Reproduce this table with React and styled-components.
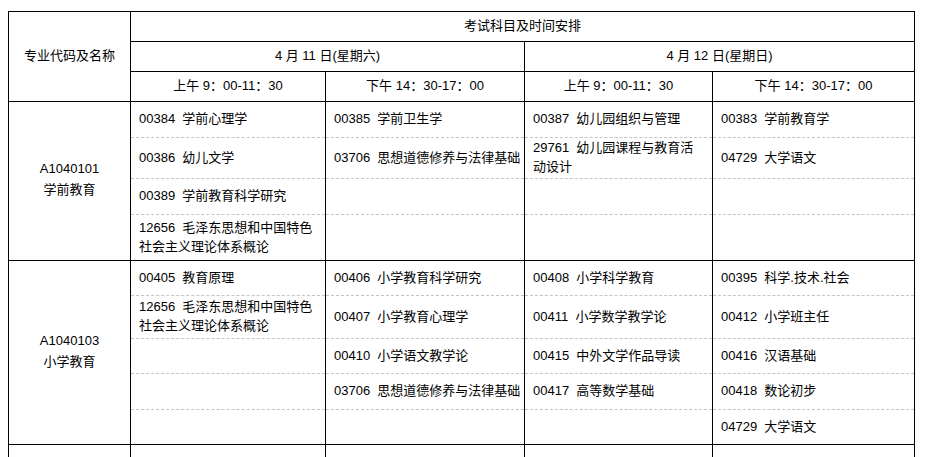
import React from "react";
import styled, { createGlobalStyle } from "styled-components";

const GlobalStyle = createGlobalStyle`
    body {
        margin: 0;
        background: #fff;
    }
`;

const colWidths = [122, 195, 199, 188, 202];

const days = [
    { date: "4 月 11 日(星期六)", slots: ["上午 9：00-11：30", "下午 14：30-17：00"] },
    { date: "4 月 12 日(星期日)", slots: ["上午 9：00-11：30", "下午 14：30-17：00"] },
];

const majors = [
    {
        code: "A1040101",
        name: "学前教育",
        rows: [
            { h: 36, cells: [["00384  学前心理学"], ["00385  学前卫生学"], ["00387  幼儿园组织与管理"], ["00383  学前教育学"]] },
            { h: 41, cells: [["00386  幼儿文学"], ["03706  思想道德修养与法律基础"], ["29761  幼儿园课程与教育活", "动设计"], ["04729  大学语文"]] },
            { h: 36, cells: [["00389  学前教育科学研究"], [], [], []] },
            { h: 46, cells: [["12656  毛泽东思想和中国特色", "社会主义理论体系概论"], [], [], []] },
        ],
    },
    {
        code: "A1040103",
        name: "小学教育",
        rows: [
            { h: 35, cells: [["00405  教育原理"], ["00406  小学教育科学研究"], ["00408  小学科学教育"], ["00395  科学.技术.社会"]] },
            { h: 43, cells: [["12656  毛泽东思想和中国特色", "社会主义理论体系概论"], ["00407  小学教育心理学"], ["00411  小学数学教学论"], ["00412  小学班主任"]] },
            { h: 35, cells: [[], ["00410  小学语文教学论"], ["00415  中外文学作品导读"], ["00416  汉语基础"]] },
            { h: 36, cells: [[], ["03706  思想道德修养与法律基础"], ["00417  高等数学基础"], ["00418  数论初步"]] },
            { h: 35, cells: [[], [], [], ["04729  大学语文"]] },
        ],
    },
    {
        code: "",
        name: "",
        rows: [{ h: 30, cells: [[], [], [], []] }],
    },
];

export default function App() {
    return (
        <>
            <GlobalStyle />
            <Page>
                <Schedule>
                    <colgroup>
                        {colWidths.map((w, i) => (
                            <Col key={i} $w={w} />
                        ))}
                    </colgroup>
                    <thead>
                        <HeadRow>
                            <HeadCell rowSpan={3}>专业代码及名称</HeadCell>
                            <HeadCell colSpan={4}>考试科目及时间安排</HeadCell>
                        </HeadRow>
                        <HeadRow>
                            {days.map((d) => (
                                <HeadCell key={d.date} colSpan={2}>{d.date}</HeadCell>
                            ))}
                        </HeadRow>
                        <HeadRow>
                            {days.map((d) =>
                                d.slots.map((s) => <HeadCell key={d.date + s}>{s}</HeadCell>)
                            )}
                        </HeadRow>
                    </thead>
                    <tbody>
                        {majors.map((m, mi) =>
                            m.rows.map((row, ri) => (
                                <BodyRow key={mi + "-" + ri} $h={row.h}>
                                    {ri === 0 && (
                                        <MajorCell rowSpan={m.rows.length}>
                                            {m.code}
                                            {m.name && <br />}
                                            {m.name}
                                        </MajorCell>
                                    )}
                                    {row.cells.map((lines, ci) => (
                                        <CourseCell key={ci} $first={ri === 0} $last={ri === m.rows.length - 1}>
                                            {lines.map((l, li) => (
                                                <React.Fragment key={li}>
                                                    {li > 0 && <br />}
                                                    {l}
                                                </React.Fragment>
                                            ))}
                                        </CourseCell>
                                    ))}
                                </BodyRow>
                            ))
                        )}
                    </tbody>
                </Schedule>
            </Page>
        </>
    );
}

const Page = styled.div`
    padding: 11px 0 0 8px;
    height: 457px;
    box-sizing: border-box;
    overflow: hidden;
`;

const Schedule = styled.table`
    border-collapse: collapse;
    table-layout: fixed;
    width: 906px;
    font-family: "Liberation Sans", "Noto Sans CJK SC", sans-serif;
    font-size: 13px;
    color: #000;
`;

const Col = styled.col`
    width: ${(p) => p.$w}px;
`;

const HeadRow = styled.tr`
    height: 30px;
`;

const BodyRow = styled.tr`
    height: ${(p) => p.$h}px;
`;

const HeadCell = styled.th`
    border: 1px solid #000;
    font-weight: normal;
    text-align: center;
    vertical-align: middle;
    padding: 0 0 2px;
    line-height: 19px;
    white-space: nowrap;
`;

const MajorCell = styled.td`
    border: 1px solid #000;
    text-align: center;
    vertical-align: middle;
    padding: 0 0 4px;
    line-height: 21px;
`;

const CourseCell = styled.td`
    border-left: 1px solid #000;
    border-right: 1px solid #000;
    border-top: ${(p) => (p.$first ? "1px solid #000" : "1px dashed #c4c4c4")};
    border-bottom: ${(p) => (p.$last ? "1px solid #000" : "1px dashed #c4c4c4")};
    padding: 0 4px 2px 8px;
    vertical-align: middle;
    text-align: left;
    line-height: 19px;
    white-space: pre;
`;
